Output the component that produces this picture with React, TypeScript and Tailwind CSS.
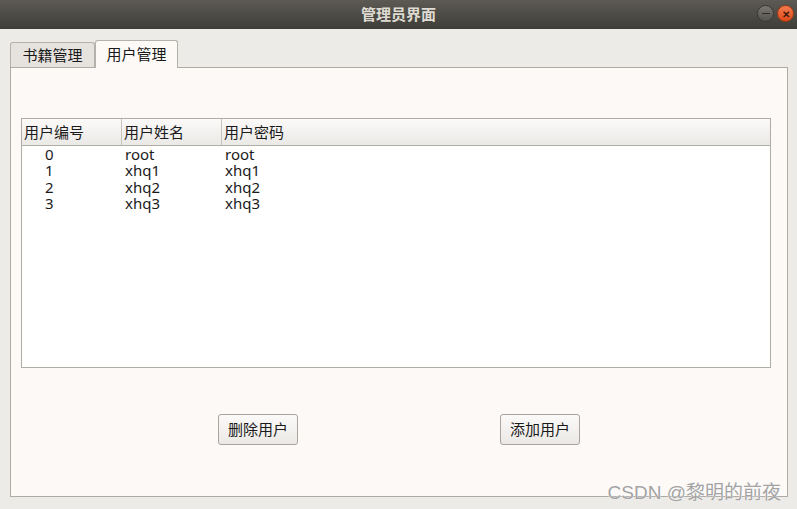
import React from "react"

const users = [
  { id: 0, name: "root", pwd: "root" },
  { id: 1, name: "xhq1", pwd: "xhq1" },
  { id: 2, name: "xhq2", pwd: "xhq2" },
  { id: 3, name: "xhq3", pwd: "xhq3" },
]

const font = { fontFamily: '"Noto Sans", "Noto Sans CJK SC", sans-serif' }

export default function App() {
  return (
    <div
      className="relative w-[797px] h-[509px] flex flex-col bg-[#edebe7] text-[#3c3c3c] overflow-hidden"
      style={font}
    >
      {/* 标题栏 */}
      <div className="relative h-[29px] shrink-0 flex items-center justify-center bg-gradient-to-b from-[#5c5a53] to-[#3e3d38]">
        <span className="text-[15px] font-bold text-[#dfdbd2]">管理员界面</span>
        <div className="absolute right-[3px] top-[5px] flex gap-[3px]">
          <div className="w-[17px] h-[17px] rounded-full bg-gradient-to-b from-[#7b7872] to-[#55534e] border border-[#3a3935] flex items-center justify-center">
            <div className="w-[8px] h-[1.5px] bg-[#2e2d2a]" />
          </div>
          <div className="w-[17px] h-[17px] rounded-full bg-gradient-to-b from-[#f27a4e] to-[#df4a16] border border-[#9c3a12] flex items-center justify-center text-[#3a1a0c] text-[10px] leading-none font-bold">
            ✕
          </div>
        </div>
      </div>

      <div className="flex-1 flex flex-col pl-[10px] pr-[9px] pt-[10px] pb-[12px]">
        {/* 选项卡 */}
        <div className="flex items-end h-[28px] shrink-0">
          <div className="h-[25px] w-[85px] flex items-center justify-center border border-[#b4b0aa] border-b-0 rounded-t-[3px] bg-[#e6e3df] text-[15px] text-[#1a1a1a]">
            书籍管理
          </div>
          <div className="relative h-[28px] w-[83px] flex items-center justify-center border border-[#b4b0aa] border-b-0 rounded-t-[3px] bg-[#fcf9f6] text-[15px] text-[#1a1a1a] -mb-px z-10">
            用户管理
          </div>
        </div>

        {/* 面板 */}
        <div className="flex-1 flex flex-col border border-[#aeaaa4] bg-[#fcf9f6] pl-[10px] pr-[16px] pt-[50px]">
          <div className="h-[250px] border border-[#b0aca6] bg-white flex flex-col text-[15px] text-[#1a1a1a]">
            <div className="h-[27px] flex border-b border-[#b0aca6] bg-gradient-to-b from-[#fbfaf9] to-[#ebe9e6]">
              <div className="w-[100px] border-r border-[#c8c4be] pl-[2px] flex items-center">用户编号</div>
              <div className="w-[100px] border-r border-[#c8c4be] pl-[2px] flex items-center">用户姓名</div>
              <div className="flex-1 pl-[2px] flex items-center">用户密码</div>
            </div>
            <div>
              {users.map((u) => (
                <div key={u.id} className="flex h-[16.4px] items-center leading-[16.4px]">
                  <div className="w-[100px] pl-[23px]">{u.id}</div>
                  <div className="w-[100px] pl-[3px]">{u.name}</div>
                  <div className="flex-1 pl-[3px]">{u.pwd}</div>
                </div>
              ))}
            </div>
          </div>

          <div className="flex pt-[46px]">
            <div className="w-[197px]" />
            <button className="w-[80px] h-[31px] border border-[#a8a49e] rounded-[3px] bg-gradient-to-b from-[#fbfaf9] to-[#ebe9e6] text-[15px] text-[#1a1a1a]">
              删除用户
            </button>
            <div className="w-[202px]" />
            <button className="w-[80px] h-[31px] border border-[#a8a49e] rounded-[3px] bg-gradient-to-b from-[#fbfaf9] to-[#ebe9e6] text-[15px] text-[#1a1a1a]">
              添加用户
            </button>
          </div>
        </div>
      </div>

      {/* 水印 */}
      <div
        className="absolute right-[16px] bottom-[7px] text-[19px] text-[#a3a3a3] leading-none"
        style={{ fontFamily: '"Liberation Sans", "Noto Sans CJK SC", sans-serif', textShadow: "0 0 1px #fff, 0 0 1px #fff" }}
      >
        CSDN @黎明的前夜
      </div>
    </div>
  )
}
